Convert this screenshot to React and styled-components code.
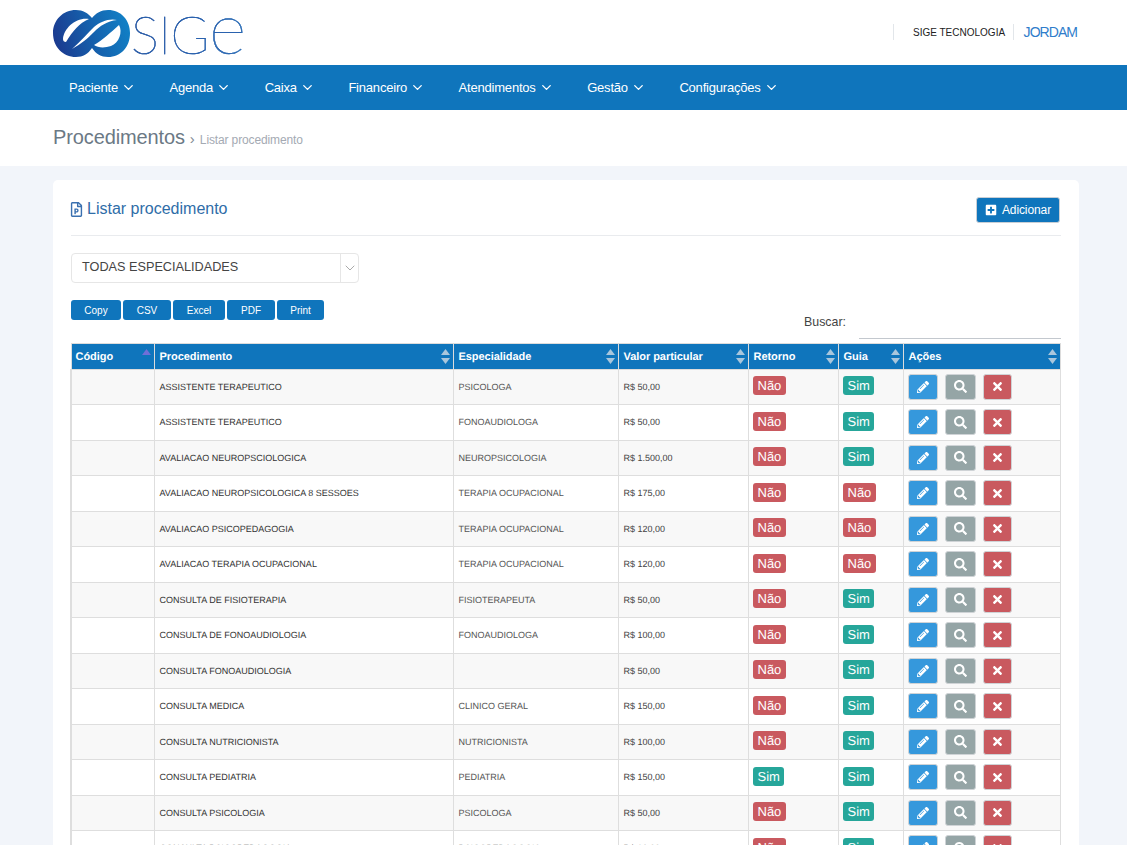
import React from "react";
import styled, { createGlobalStyle } from "styled-components";
import { FaPencilAlt, FaSearch, FaTimes, FaPlusSquare, FaRegFilePowerpoint } from "react-icons/fa";
import { ChevronDown } from "lucide-react";

const Global = createGlobalStyle`
  html, body { margin: 0; padding: 0; background: #f2f5fa; }
  body { font-family: "Liberation Sans", Arial, sans-serif; color: #333; }
`;

const Frame = styled.div`
  width: 1127px;
  height: 845px;
  overflow: hidden;
`;

const TopBar = styled.header`
  height: 65px;
  background: #fff;
  padding: 0 50px 0 53px;
  display: flex;
  align-items: flex-start;
  justify-content: space-between;
`;

const Brand = styled.div`
  display: flex;
  align-items: flex-start;
  height: 65px;
`;

const BrandMark = styled.svg`
  width: 78px;
  height: 65px;
  flex: none;
`;

const BrandName = styled.span`
  margin: -12px 0 0 0;
  padding-right: 4px;
  font-family: Lato, sans-serif;
  font-weight: 100;
  font-size: 52.5px;
  line-height: 76px;
  height: 76px;
  letter-spacing: -0.5px;
  white-space: nowrap;
  -webkit-text-stroke: 0.45px #2a62ae;
  background: linear-gradient(90deg, #25458f, #2a5fae 55%, #3d8ecb);
  -webkit-background-clip: text;
  background-clip: text;
  color: transparent;
`;

const BrandE = styled.span`
  font-size: 72px;
`;

const UserArea = styled.div`
  display: flex;
  align-items: center;
  height: 16px;
  margin-top: 24px;
`;

const Company = styled.span`
  border-left: 1px solid #e2e6ea;
  border-right: 1px solid #e2e6ea;
  padding: 1px 8px 0 19px;
  font-size: 10px;
  line-height: 15px;
  color: #222;
  white-space: nowrap;
`;

const UserName = styled.span`
  padding-left: 9.5px;
  font-size: 14px;
  letter-spacing: -0.95px;
  color: #2f7dcb;
`;

const Nav = styled.nav`
  height: 45px;
  background: #0f75bc;
  display: flex;
  align-items: center;
  padding-left: 53px;
`;

const NavItem = styled.div`
  display: flex;
  align-items: center;
  gap: 3px;
  padding: 0 17.5px 0 16px;
  font-size: 13px;
  letter-spacing: -0.2px;
  color: #fff;
`;

const Crumbs = styled.div`
  height: 56px;
  background: #fff;
  padding: 15px 0 0 53px;
  box-sizing: border-box;
  display: flex;
  align-items: baseline;
`;

const CrumbTitle = styled.h1`
  margin: 0;
  font-size: 20px;
  font-weight: 400;
  line-height: 24px;
  letter-spacing: -0.12px;
  color: #6b7985;
`;

const CrumbSep = styled.span`
  margin: 0 5px;
  font-size: 15px;
  color: #7f8a94;
`;

const CrumbSub = styled.span`
  font-size: 12px;
  letter-spacing: -0.13px;
  color: #a4aab3;
`;

const Card = styled.main`
  margin: 14px 48px 0 53px;
  padding: 17px 18px 0;
  background: #fff;
  border-radius: 5px 5px 0 0;
`;

const CardHead = styled.div`
  height: 38px;
  border-bottom: 1px solid #e9ebee;
  display: flex;
  justify-content: space-between;
  align-items: flex-start;
`;

const CardTitle = styled.h2`
  margin: 3px 0 0 -1px;
  display: flex;
  align-items: center;
  gap: 4px;
  font-size: 16px;
  font-weight: 400;
  line-height: 18px;
  color: #2f6da8;
  svg { width: 13px; height: 15px; color: #3a70b0; }
`;

const AddButton = styled.button`
  width: 84px;
  height: 26px;
  margin-right: 1px;
  padding: 0;
  border: 1px solid #c9ced4;
  border-radius: 3px;
  background: #0f75bc;
  color: #fff;
  font-family: inherit;
  font-size: 12px;
  letter-spacing: -0.1px;
  display: flex;
  align-items: center;
  justify-content: center;
  gap: 5px;
  svg { width: 12px; height: 12px; }
`;

const Select = styled.div`
  width: 288px;
  height: 30px;
  margin-top: 17px;
  box-sizing: border-box;
  border: 1px solid #e6e6e6;
  border-radius: 4px;
  display: flex;
  align-items: center;
  font-size: 12.7px;
  color: #444;
`;

const SelectText = styled.span`
  flex: 1;
  padding: 0 0 2px 10px;
`;

const SelectArrow = styled.span`
  width: 17px;
  height: 100%;
  border-left: 1px solid #e6e6e6;
  display: flex;
  align-items: center;
  justify-content: center;
  color: #aaa;
`;

const Tools = styled.div`
  height: 43px;
  margin-top: 17px;
  display: flex;
  justify-content: space-between;
  align-items: flex-start;
`;

const ExportGroup = styled.div`
  display: flex;
  gap: 2px;
`;

const ExportButton = styled.button`
  width: ${(p) => p.$w}px;
  height: 20px;
  padding: 0;
  border: none;
  border-radius: 3px;
  background: #0f75bc;
  color: #fff;
  font-family: inherit;
  font-size: 10px;
`;

const Search = styled.label`
  display: flex;
  align-items: flex-start;
  font-size: 12.4px;
  color: #444;
`;

const SearchLabel = styled.span`
  margin: 15px 13px 0 0;
`;

const SearchInput = styled.span`
  display: block;
  width: 202px;
  height: 39px;
  box-sizing: border-box;
  border-bottom: 1px solid #c3c8ce;
`;

const Table = styled.table`
  width: 989px;
  margin-left: -1px;
  table-layout: fixed;
  border-collapse: collapse;
  font-size: 9px;
  text-rendering: geometricPrecision;
`;

const Th = styled.th`
  position: relative;
  height: 22.5px;
  padding: 2px 4px 0 5px;
  background: #0f75bc;
  border: 1px solid #dcdcdc;
  color: #fff;
  font-size: 11px;
  font-weight: 700;
  text-align: left;
  letter-spacing: -0.05px;
  &:first-child { padding-left: 4px; }
`;

const SortIcon = styled.svg`
  position: absolute;
  right: 3px;
  top: 5px;
  width: 9px;
  height: 15px;
`;

const Row = styled.tr`
  height: 35.5px;
  background: ${(p) => (p.$odd ? "#f8f8f8" : "#fff")};
`;

const Td = styled.td`
  padding: 0 5px;
  border: 1px solid #dedede;
  color: ${(p) => p.$color || "#333"};
  white-space: nowrap;
  overflow: hidden;
`;

const ControlCell = styled(Td)`
  padding: 0 4.5px;
`;

const CodeCell = styled(Td)`
  border-left: 2px solid #dedede;
`;

const Badge = styled.span`
  display: inline-block;
  height: 19px;
  margin-top: -2px;
  padding: 0 4.5px;
  border-radius: 3px;
  background: ${(p) => (p.$yes ? "#26a69a" : "#c9595f")};
  color: #fff;
  font-size: 13px;
  line-height: 19px;
  vertical-align: middle;
`;

const Actions = styled.div`
  display: flex;
  gap: 7px;
`;

const ActionButton = styled.button`
  width: ${(p) => p.$w}px;
  height: 26px;
  padding: 0;
  box-sizing: border-box;
  border: 1px solid #cfd3d6;
  border-radius: 3px;
  background: ${(p) => p.$bg};
  color: #fff;
  display: flex;
  align-items: center;
  justify-content: center;
  svg { width: ${(p) => p.$icon}px; height: ${(p) => p.$icon}px; }
`;

const nav = ["Paciente", "Agenda", "Caixa", "Financeiro", "Atendimentos", "Gestão", "Configurações"];
const cols = [
  ["Código", 83],
  ["Procedimento", 299],
  ["Especialidade", 165],
  ["Valor particular", 130],
  ["Retorno", 90],
  ["Guia", 65],
  ["Ações", 157],
];
const rows = [
  ["ASSISTENTE TERAPEUTICO", "PSICOLOGA", "R$ 50,00", 0, 1],
  ["ASSISTENTE TERAPEUTICO", "FONOAUDIOLOGA", "R$ 50,00", 0, 1],
  ["AVALIACAO NEUROPSCIOLOGICA", "NEUROPSICOLOGIA", "R$ 1.500,00", 0, 1],
  ["AVALIACAO NEUROPSICOLOGICA 8 SESSOES", "TERAPIA OCUPACIONAL", "R$ 175,00", 0, 0],
  ["AVALIACAO PSICOPEDAGOGIA", "TERAPIA OCUPACIONAL", "R$ 120,00", 0, 0],
  ["AVALIACAO TERAPIA OCUPACIONAL", "TERAPIA OCUPACIONAL", "R$ 120,00", 0, 0],
  ["CONSULTA DE FISIOTERAPIA", "FISIOTERAPEUTA", "R$ 50,00", 0, 1],
  ["CONSULTA DE FONOAUDIOLOGIA", "FONOAUDIOLOGA", "R$ 100,00", 0, 1],
  ["CONSULTA FONOAUDIOLOGIA", "", "R$ 50,00", 0, 1],
  ["CONSULTA MEDICA", "CLINICO GERAL", "R$ 150,00", 0, 1],
  ["CONSULTA NUTRICIONISTA", "NUTRICIONISTA", "R$ 100,00", 0, 1],
  ["CONSULTA PEDIATRIA", "PEDIATRIA", "R$ 150,00", 1, 1],
  ["CONSULTA PSICOLOGIA", "PSICOLOGA", "R$ 50,00", 0, 1],
  ["CONSULTA PSICOPEDAGOGIA", "PSICOPEDAGOGIA", "R$ 80,00", 0, 1],
];

const Logo = () => (
  <BrandMark viewBox="0 0 78 65">
    <defs>
      <linearGradient id="lg" x1="0" x2="1" y1="0.6" y2="0.4">
        <stop offset="0" stopColor="#1b3a8f" />
        <stop offset="0.5" stopColor="#1560ac" />
        <stop offset="1" stopColor="#1180c6" />
      </linearGradient>
    </defs>
    <path
      fill="url(#lg)"
      d="M0 33C0 20 10 10 23 10C30 10 35 13 39 18C43 13 48 10 55 10C68 10 77 20 77 33C77 47 68 57 55 57C48 57 43 54 39 48C35 54 30 57 23 57C10 57 0 47 0 33Z"
    />
    <path fill="#fff" d="M10 39C11 28 23 17 36 19C26 23 20 31 13 42C11 42 10 41 10 39Z" />
    <path fill="#fff" d="M19 49C28 41 35 33 41 27C47 22 56 18 64 20C54 21 47 26 41 32C34 39 28 44 19 49Z" />
    <path fill="#fff" d="M41 45C50 40 58 32 66 25C70 32 66 43 58 46C52 48 45 48 41 45Z" />
  </BrandMark>
);

const Sort = ({ up }) => (
  <SortIcon viewBox="0 0 9 15">
    <path d="M4.5 0L9 6H0Z" fill={up ? "#6f6fd8" : "#a9c6dc"} />
    {!up && <path d="M4.5 15L9 9H0Z" fill="#a9c6dc" />}
  </SortIcon>
);

export default function App() {
  return (
    <Frame>
      <Global />
      <TopBar>
        <Brand>
          <Logo />
          <BrandName>SIG<BrandE>e</BrandE></BrandName>
        </Brand>
        <UserArea>
          <Company>SIGE TECNOLOGIA</Company>
          <UserName>JORDAM</UserName>
        </UserArea>
      </TopBar>
      <Nav>
        {nav.map((n) => (
          <NavItem key={n}>
            {n}
            <ChevronDown size={15} strokeWidth={2.2} />
          </NavItem>
        ))}
      </Nav>
      <Crumbs>
        <CrumbTitle>Procedimentos</CrumbTitle>
        <CrumbSep>›</CrumbSep>
        <CrumbSub>Listar procedimento</CrumbSub>
      </Crumbs>
      <Card>
        <CardHead>
          <CardTitle>
            <FaRegFilePowerpoint />
            Listar procedimento
          </CardTitle>
          <AddButton>
            <FaPlusSquare />
            Adicionar
          </AddButton>
        </CardHead>
        <Select>
          <SelectText>TODAS ESPECIALIDADES</SelectText>
          <SelectArrow>
            <ChevronDown size={16} strokeWidth={1.5} />
          </SelectArrow>
        </Select>
        <Tools>
          <ExportGroup>
            <ExportButton $w={50}>Copy</ExportButton>
            <ExportButton $w={48}>CSV</ExportButton>
            <ExportButton $w={52}>Excel</ExportButton>
            <ExportButton $w={48}>PDF</ExportButton>
            <ExportButton $w={47}>Print</ExportButton>
          </ExportGroup>
          <Search>
            <SearchLabel>Buscar:</SearchLabel>
            <SearchInput />
          </Search>
        </Tools>
        <Table>
          <colgroup>
            {cols.map(([name, w]) => (
              <col key={name} style={{ width: w }} />
            ))}
          </colgroup>
          <thead>
            <tr>
              {cols.map(([name], i) => (
                <Th key={name}>
                  {name}
                  <Sort up={i === 0} />
                </Th>
              ))}
            </tr>
          </thead>
          <tbody>
            {rows.map((r, i) => (
              <Row key={i} $odd={i % 2 === 0}>
                <CodeCell />
                <Td>{r[0]}</Td>
                <Td $color="#555">{r[1]}</Td>
                <Td $color="#444">{r[2]}</Td>
                <ControlCell><Badge $yes={r[3]}>{r[3] ? "Sim" : "Não"}</Badge></ControlCell>
                <ControlCell><Badge $yes={r[4]}>{r[4] ? "Sim" : "Não"}</Badge></ControlCell>
                <ControlCell>
                  <Actions>
                    <ActionButton $w={30} $bg="#3598dc" $icon={12}><FaPencilAlt /></ActionButton>
                    <ActionButton $w={31} $bg="#95a5a6" $icon={13}><FaSearch /></ActionButton>
                    <ActionButton $w={29} $bg="#c9595f" $icon={13}><FaTimes /></ActionButton>
                  </Actions>
                </ControlCell>
              </Row>
            ))}
          </tbody>
        </Table>
      </Card>
    </Frame>
  );
}
